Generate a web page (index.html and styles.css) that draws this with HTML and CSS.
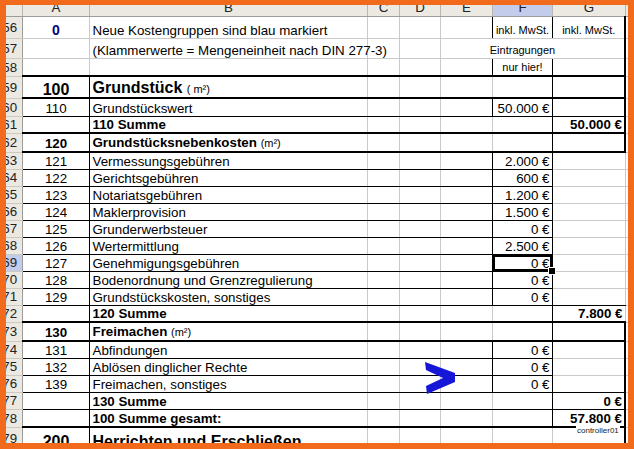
FILE: index.html
```html
<!DOCTYPE html>
<html lang="de">
<head>
<meta charset="utf-8">
<title>Kostenberechnung</title>
<link rel="stylesheet" href="styles.css">
</head>
<body>
<div class="frame">
<table class="sheet">
<colgroup><col class="w-rh"><col class="w-a"><col class="w-b"><col class="w-c"><col class="w-d"><col class="w-e"><col class="w-f"><col class="w-g"><col class="w-h"></colgroup>
<tr class="hdr h17"><td class="rh"></td><td>A</td><td>B</td><td>C</td><td>D</td><td>E</td><td class="hsel">F</td><td>G</td><td></td></tr>
<tr class="h22 ve vf vg"><td class="rh">56</td><td class="c b blue zero">0</td><td>Neue Kostengruppen sind blau markiert</td><td></td><td></td><td></td><td class="c sm">inkl. MwSt.</td><td class="c sm">inkl. MwSt.</td><td></td></tr>
<tr class="h20 vg ovf"><td class="rh">57</td><td></td><td>(Klammerwerte = Mengeneinheit nach DIN 277-3)</td><td></td><td></td><td></td><td class="sm"><div class="spill">Eintragungen</div></td><td></td><td></td></tr>
<tr class="h18 ve vf vg thick"><td class="rh">58</td><td></td><td></td><td></td><td></td><td></td><td class="c sm">nur hier!</td><td></td><td></td></tr>
<tr class="h22 va vf vg thick"><td class="rh">59</td><td class="c big">100</td><td class="big">Grundstück <span class="unit">(&nbsp;m²)</span></td><td></td><td></td><td></td><td></td><td></td><td></td></tr>
<tr class="h18 va ve vf vg ln-ag"><td class="rh">60</td><td class="c">110</td><td>Grundstückswert</td><td></td><td></td><td></td><td class="r">50.000 €</td><td></td><td></td></tr>
<tr class="h17 va vf vg thick"><td class="rh">61</td><td></td><td class="b">110 Summe</td><td></td><td></td><td></td><td></td><td class="r b">50.000 €</td><td></td></tr>
<tr class="h19 va vf vg thick"><td class="rh">62</td><td class="c b">120</td><td class="b">Grundstücksnebenkosten <span class="unit">(m²)</span></td><td></td><td></td><td></td><td></td><td></td><td></td></tr>
<tr class="h17 va ve vf ln-af"><td class="rh">63</td><td class="c">121</td><td>Vermessungsgebühren</td><td></td><td></td><td></td><td class="r">2.000 €</td><td></td><td></td></tr>
<tr class="h17 va ve vf ln-af"><td class="rh">64</td><td class="c">122</td><td>Gerichtsgebühren</td><td></td><td></td><td></td><td class="r">600 €</td><td></td><td></td></tr>
<tr class="h17 va ve vf ln-af"><td class="rh">65</td><td class="c">123</td><td>Notariatsgebühren</td><td></td><td></td><td></td><td class="r">1.200 €</td><td></td><td></td></tr>
<tr class="h17 va ve vf ln-af"><td class="rh">66</td><td class="c">124</td><td>Maklerprovision</td><td></td><td></td><td></td><td class="r">1.500 €</td><td></td><td></td></tr>
<tr class="h17 va ve vf ln-af"><td class="rh">67</td><td class="c">125</td><td>Grunderwerbsteuer</td><td></td><td></td><td></td><td class="r">0 €</td><td></td><td></td></tr>
<tr class="h17 va ve vf ln-af"><td class="rh">68</td><td class="c">126</td><td>Wertermittlung</td><td></td><td></td><td></td><td class="r">2.500 €</td><td></td><td></td></tr>
<tr class="h17 va ve vf ln-af"><td class="rh rsel">69</td><td class="c">127</td><td>Genehmigungsgebühren</td><td></td><td></td><td></td><td class="r sel">0 €</td><td></td><td></td></tr>
<tr class="h17 va ve vf ln-af"><td class="rh">70</td><td class="c">128</td><td>Bodenordnung und Grenzregulierung</td><td></td><td></td><td></td><td class="r">0 €</td><td></td><td></td></tr>
<tr class="h17 va ve vf ln-ag"><td class="rh">71</td><td class="c">129</td><td>Grundstückskosten, sonstiges</td><td></td><td></td><td></td><td class="r">0 €</td><td></td><td></td></tr>
<tr class="h17 va vf thick"><td class="rh">72</td><td></td><td class="b">120 Summe</td><td></td><td></td><td></td><td></td><td class="r b">7.800 €</td><td></td></tr>
<tr class="h19 va vf vg thick"><td class="rh">73</td><td class="c b">130</td><td class="b">Freimachen <span class="unit">(m²)</span></td><td></td><td></td><td></td><td></td><td></td><td></td></tr>
<tr class="h17 va ve vf vg ln-af"><td class="rh">74</td><td class="c">131</td><td>Abfindungen</td><td></td><td></td><td></td><td class="r">0 €</td><td></td><td></td></tr>
<tr class="h17 va ve vf vg ln-af"><td class="rh">75</td><td class="c">132</td><td>Ablösen dinglicher Rechte</td><td></td><td></td><td></td><td class="r">0 €</td><td></td><td></td></tr>
<tr class="h17 va ve vf vg ln-ag"><td class="rh">76</td><td class="c">139</td><td>Freimachen, sonstiges</td><td></td><td></td><td></td><td class="r">0 €</td><td></td><td></td></tr>
<tr class="h17 va vf vg ln-ag"><td class="rh">77</td><td></td><td class="b">130 Summe</td><td></td><td></td><td></td><td></td><td class="r b">0 €</td><td></td></tr>
<tr class="h18 va vf vg thick"><td class="rh">78</td><td></td><td class="b">100 Summe gesamt:</td><td></td><td></td><td></td><td></td><td class="r b">57.800 €</td><td></td></tr>
<tr class="h22 va vg"><td class="rh">79</td><td class="c big">200</td><td class="big">Herrichten und Erschließen</td><td></td><td></td><td></td><td></td><td></td><td></td></tr>
</table>
<svg class="arrow" width="34" height="36" viewBox="0 0 34 36"><polygon points="1,2 31,13 31,22 3,34 2,26 19,18 2,10" fill="#1616d6"/></svg>
<div class="mark">controller01</div>
</div>
</body>
</html>
```

FILE: styles.css
```css
* { box-sizing: border-box; }
html, body { margin: 0; padding: 0; background: #fff; }
body {
  font-family: "Liberation Sans", Arial, sans-serif;
  font-size: 13.33px;
  color: #000;
}
.frame {
  position: relative;
  width: 634px;
  height: 449px;
  border-style: solid;
  border-color: #f26a1b;
  border-width: 5px 6px 6px 6px;
  overflow: hidden;
  background: #fff;
}
.sheet {
  border-collapse: collapse;
  table-layout: fixed;
  width: 647px;
  margin: -6px 0 0 -8px;
}
.w-rh { width: 24px; }
.w-a { width: 67px; }
.w-b { width: 278px; }
.w-c { width: 32px; }
.w-d { width: 41px; }
.w-e { width: 52px; }
.w-f { width: 60px; }
.w-g { width: 73px; }
.w-h { width: 20px; }

.sheet td {
  padding: 0 2px 0 3px;
  border: 0;
  border-right: 1px solid #cacaca;
  border-bottom: 1px solid #cacaca;
  white-space: nowrap;
  vertical-align: bottom;
  line-height: 15px;
}
.h17 { height: 17px; }
.h18 { height: 18px; }
.h19 { height: 19px; }
.h20 { height: 20px; }
.h22 { height: 22px; }

.sheet td.rh {
  background: #ebe9e2;
  text-align: center;
  color: #222;
  padding: 0;
  border-right: 1px solid #9c9c9c;
  border-bottom: 1px solid #cbc9c0;
  vertical-align: middle;
}
.sheet td.rsel { background: #c4cceb; }
.hdr td {
  background: #ebe9e2;
  text-align: center;
  color: #222;
  vertical-align: middle;
}
.sheet .hdr td { border-bottom: 1px solid #9c9c9c; border-right: 1px solid #b9b7ae; }
.sheet .hdr td.hsel { background: #c4cceb; }

.c { text-align: center; }
.r { text-align: right; }
.b { font-weight: bold; }
.big { font-size: 16px; font-weight: bold; line-height: 18px; }
.sm { font-size: 11px; }
.blue { color: #000080; }
.zero { font-size: 14px; }
.unit { font-size: 11px; font-weight: normal; }
.spill { margin: 0 -10px; text-align: center; }

/* vertical black borders */
.va td:nth-child(2) { border-right-color: #000; }
.ve td:nth-child(6) { border-right-color: #000; }
.vf td:nth-child(7) { border-right-color: #000; }
.sheet .vg td:nth-child(8) { border-right: 2px solid #000; }
.ovf td:nth-child(6), .ovf td:nth-child(7) { border-right-color: transparent; }

/* horizontal black borders */
.ln-af td:nth-child(n+2):nth-child(-n+7) { border-bottom-color: #000; }
.ln-ag td:nth-child(n+2):nth-child(-n+8) { border-bottom-color: #000; }
.sheet .thick td:nth-child(n+2):nth-child(-n+8) { border-bottom: 2px solid #000; }

/* selected cell */
.sheet td.sel {
  position: relative;
  box-shadow: inset 0 0 0 2px #000;
}
.sheet td.sel::after {
  content: "";
  position: absolute;
  right: -4px;
  bottom: -4px;
  width: 6px;
  height: 6px;
  background: #000;
  border: 1px solid #fff;
}

.arrow {
  position: absolute;
  left: 418px;
  top: 355px;
}
.mark {
  position: absolute;
  left: 570px;
  top: 421px;
  font-size: 8px;
  line-height: 9px;
  color: #222;
  background: #fff;
  padding: 0 1px;
}
```
